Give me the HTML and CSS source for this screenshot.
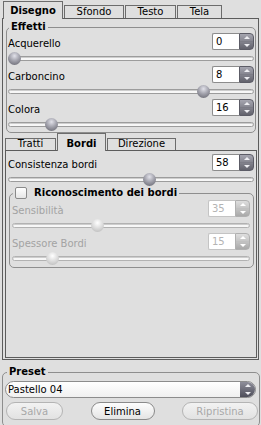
FILE: index.html
```html
<!DOCTYPE html>
<html lang="it">
<head>
    <meta charset="UTF-8">
    <meta name="viewport" content="width=device-width, initial-scale=1.0">
    <title>Disegno</title>
    <link rel="stylesheet" href="styles.css">
</head>
<body>

    <!-- Main tabs -->
    <div class="tabs main-tabs">
        <div class="tab tab-disegno active">Disegno</div>
        <div class="tab tab-sfondo">Sfondo</div>
        <div class="tab tab-testo">Testo</div>
        <div class="tab tab-tela">Tela</div>
    </div>

    <div class="panel main-panel">

        <!-- Effetti -->
        <fieldset class="group effects">
            <legend>Effetti</legend>

            <div class="field">
                <div class="field-row">
                    <span class="label">Acquerello</span>
                    <div class="spin">
                        <span class="spin-value">0</span>
                        <span class="spin-arrows"><span class="half"><i class="up"></i></span><span class="half"><i class="down"></i></span></span>
                    </div>
                </div>
                <div class="slider"><div class="track"></div><div class="thumb" style="--v: 0"></div></div>
            </div>

            <div class="field">
                <div class="field-row">
                    <span class="label">Carboncino</span>
                    <div class="spin">
                        <span class="spin-value">8</span>
                        <span class="spin-arrows"><span class="half"><i class="up"></i></span><span class="half"><i class="down"></i></span></span>
                    </div>
                </div>
                <div class="slider"><div class="track"></div><div class="thumb" style="--v: 0.81"></div></div>
            </div>

            <div class="field">
                <div class="field-row">
                    <span class="label">Colora</span>
                    <div class="spin">
                        <span class="spin-value">16</span>
                        <span class="spin-arrows"><span class="half"><i class="up"></i></span><span class="half"><i class="down"></i></span></span>
                    </div>
                </div>
                <div class="slider"><div class="track"></div><div class="thumb" style="--v: 0.16"></div></div>
            </div>
        </fieldset>

        <!-- Sub tabs -->
        <div class="tabs sub-tabs">
            <div class="tab tab-tratti">Tratti</div>
            <div class="tab tab-bordi active">Bordi</div>
            <div class="tab tab-direzione">Direzione</div>
        </div>

        <div class="panel sub-panel">
            <div class="field first">
                <div class="field-row">
                    <span class="label">Consistenza bordi</span>
                    <div class="spin">
                        <span class="spin-value">58</span>
                        <span class="spin-arrows"><span class="half"><i class="up"></i></span><span class="half"><i class="down"></i></span></span>
                    </div>
                </div>
                <div class="slider"><div class="track"></div><div class="thumb" style="--v: 0.58"></div></div>
            </div>

            <fieldset class="group edges disabled">
                <legend><span class="checkbox"></span>Riconoscimento dei bordi</legend>

                <div class="field">
                    <div class="field-row">
                        <span class="label">Sensibilità</span>
                        <div class="spin">
                            <span class="spin-value">35</span>
                            <span class="spin-arrows"><span class="half"><i class="up"></i></span><span class="half"><i class="down"></i></span></span>
                        </div>
                    </div>
                    <div class="slider"><div class="track"></div><div class="thumb" style="--v: 0.35"></div></div>
                </div>

                <div class="field">
                    <div class="field-row">
                        <span class="label">Spessore Bordi</span>
                        <div class="spin">
                            <span class="spin-value">15</span>
                            <span class="spin-arrows"><span class="half"><i class="up"></i></span><span class="half"><i class="down"></i></span></span>
                        </div>
                    </div>
                    <div class="slider"><div class="track"></div><div class="thumb" style="--v: 0.15"></div></div>
                </div>
            </fieldset>
        </div>
    </div>

    <!-- Preset -->
    <fieldset class="group preset">
        <legend>Preset</legend>
        <div class="combo">
            <span class="combo-text">Pastello 04</span>
            <span class="spin-arrows"><span class="half"><i class="up"></i></span><span class="half"><i class="down"></i></span></span>
        </div>
        <div class="buttons">
            <button class="btn btn-salva" disabled>Salva</button>
            <button class="btn btn-elimina">Elimina</button>
            <button class="btn btn-ripristina" disabled>Ripristina</button>
        </div>
    </fieldset>

</body>
</html>
```

FILE: styles.css
```css
body {
    margin: 0;
    padding-left: 2px;
    height: 425px;
    overflow: hidden;
    background: #dfdfdf;
    font-family: "DejaVu Sans", sans-serif;
    font-size: 10px;
    color: #000;
}

/* Tabs */
.tabs {
    display: flex;
    align-items: flex-end;
}

.tab {
    box-sizing: border-box;
    border: 1px solid #6c6c6c;
    border-bottom: none;
    margin-right: 1px;
    background: #dfdfdf;
    text-align: center;
    white-space: nowrap;
}

.tab.active {
    position: relative;
    z-index: 1;
    margin-bottom: -1px;
    font-weight: bold;
}

.main-tabs {
    height: 18px;
    padding-left: 1px;
}

.main-tabs .tab {
    height: 13px;
    line-height: 12px;
}

.main-tabs .tab.active {
    height: 18px;
    padding-top: 3px;
}

.tab-disegno { width: 60px; }
.tab-sfondo { width: 60px; }
.tab-testo { width: 51px; }
.tab-tela { width: 45px; }

.sub-tabs {
    height: 17px;
    margin-left: 2px;
}

.sub-tabs .tab {
    height: 12px;
    line-height: 10px;
}

.sub-tabs .tab.active {
    height: 18px;
    padding-top: 4px;
    line-height: 12px;
}

.tab-tratti { width: 51px; }
.tab-bordi { width: 49px; }
.tab-direzione { width: 69px; }

/* Panels */
.panel {
    box-sizing: border-box;
    border: 1px solid #5c5c5c;
}

.main-panel {
    height: 342px;
    margin-right: 2px;
}

.sub-panel {
    height: 208px;
    margin: 0 1px 1px 2px;
    padding: 0 2px;
}

/* Group boxes */
.group {
    margin: 0;
    min-width: 0;
    border: 1px solid #8e8e8e;
    border-radius: 5px;
}

.group legend {
    margin-left: 1px;
    padding: 0 2px;
    line-height: 12px;
    font-weight: bold;
}

.effects {
    margin: 2px 2px 0 3px;
    padding: 0 1px;
}

.edges {
    margin: 0 0 0 1px;
    padding: 1px 3px 1px 2px;
}

.edges legend {
    display: flex;
    align-items: center;
    gap: 7px;
}

.checkbox {
    display: block;
    box-sizing: border-box;
    width: 12px;
    height: 12px;
    border: 1px solid #8a8a8a;
    border-radius: 2px;
    background: linear-gradient(#ffffff, #e6e6e6);
}

.preset {
    margin: 6px 1px 0 0;
    padding: 0 3px 6px 2px;
}

.preset legend {
    margin-left: 2px;
}

/* Fields */
.field.first {
    padding-top: 3px;
}

.field-row {
    display: flex;
    justify-content: space-between;
    align-items: flex-end;
    height: 17px;
}

.label {
    line-height: 12px;
}

.disabled .label {
    color: #a3a3a3;
}

/* Spin box */
.spin {
    display: flex;
    width: 42px;
    height: 17px;
}

.spin-value {
    flex: 1;
    box-sizing: border-box;
    padding: 1px 0 0 3px;
    border: 1px solid #8c8c8c;
    border-right: none;
    border-radius: 2px 0 0 2px;
    background: #fff;
    line-height: 14px;
}

.spin-arrows {
    display: flex;
    flex-direction: column;
    width: 15px;
    box-sizing: border-box;
    border: 1px solid #5c5c66;
    border-radius: 0 4px 4px 0;
    background: linear-gradient(#a6a6b0, #62626c);
}

.spin-arrows .half {
    flex: 1;
    display: flex;
    align-items: center;
    justify-content: center;
}

.spin-arrows .half + .half {
    border-top: 1px solid #7c7c86;
}

.up {
    border-left: 3px solid transparent;
    border-right: 3px solid transparent;
    border-bottom: 3px solid #eeeef2;
}

.down {
    border-left: 3px solid transparent;
    border-right: 3px solid transparent;
    border-top: 3px solid #eeeef2;
}

.disabled .spin-value {
    border-color: #c4c4c4;
    color: #b4b4b4;
}

.disabled .spin-arrows {
    border-color: #b0b0b0;
    background: linear-gradient(#dedede, #a9a9a9);
}

.disabled .spin-arrows .half + .half {
    border-top-color: #c0c0c0;
}

.disabled .up { border-bottom-color: #fff; }
.disabled .down { border-top-color: #fff; }

/* Slider */
.slider {
    position: relative;
    display: flex;
    align-items: center;
    height: 16px;
}

.track {
    flex: 1;
    box-sizing: border-box;
    height: 5px;
    border: 1px solid #9c9c9c;
    border-radius: 3px;
    background: #f7f7f7;
    box-shadow: inset 0 1px 0 #cdcdcd;
}

.thumb {
    position: absolute;
    top: 50%;
    left: calc(var(--v) * (100% - 13px));
    width: 13px;
    height: 13px;
    margin-top: -6.5px;
    border-radius: 50%;
    background: radial-gradient(circle at 50% 30%, #e2e2ea 0%, #a2a2ac 45%, #5e5e68 100%);
}

.disabled .track {
    border-color: #b2b2b2;
}

.disabled .thumb {
    background: radial-gradient(circle at 50% 30%, #ffffff 0%, #dedede 45%, #b4b4b4 100%);
}

/* Preset */
.combo {
    display: flex;
    margin-top: 3px;
    height: 17px;
    box-sizing: border-box;
    border: 1px solid #8c8c8c;
    border-radius: 9px;
    background: linear-gradient(#ffffff, #f0f0f0);
    overflow: hidden;
}

.combo-text {
    flex: 1;
    padding-left: 2px;
    line-height: 15px;
}

.combo .spin-arrows {
    border: none;
    border-radius: 0;
    background: linear-gradient(#8e8e9a, #4e4e5a);
}

.combo .spin-arrows .half + .half {
    border-top: none;
}

.buttons {
    display: flex;
    justify-content: space-between;
    margin: 4px -2px 0 1px;
}

.btn {
    box-sizing: border-box;
    height: 18px;
    padding: 0;
    border: 1px solid #8a8a8a;
    border-radius: 9px;
    background: linear-gradient(#fdfdfd, #e4e4e4);
    font-family: "DejaVu Sans", sans-serif;
    font-size: 10px;
    color: #000;
}

.btn:disabled {
    border-color: #b4b4b4;
    background: linear-gradient(#f2f2f2, #e2e2e2);
    color: #a8a8a8;
}

.btn-salva { width: 57px; }
.btn-elimina { width: 64px; }
.btn-ripristina { width: 76px; }
```
